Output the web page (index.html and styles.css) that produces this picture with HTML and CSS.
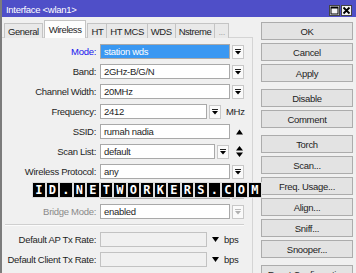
FILE: index.html
```html
<!DOCTYPE html>
<html lang="en">
<head>
    <meta charset="UTF-8">
    <title>Interface &lt;wlan1&gt;</title>
    <link rel="stylesheet" href="styles.css">
</head>
<body>
    <div class="window">
        <!-- Title bar -->
        <div class="titlebar">
            <span class="title">Interface &lt;wlan1&gt;</span>
            <div class="winbtns">
                <span class="wbtn"><svg width="9" height="9" viewBox="0 0 9 9"><rect x="1" y="1" width="7" height="7" fill="none" stroke="#000" stroke-width="1"/><rect x="1" y="1" width="7" height="1.5" fill="#000"/></svg></span>
                <span class="wbtn"><svg width="9" height="9" viewBox="0 0 9 9"><path d="M1.5 1.5l6 6M7.5 1.5l-6 6" stroke="#000" stroke-width="1.8"/></svg></span>
            </div>
        </div>

        <div class="content">
            <div class="main">
                <!-- Tabs -->
                <div class="tabs">
                    <span class="tab">General</span>
                    <span class="tab active">Wireless</span>
                    <span class="tab">HT</span>
                    <span class="tab">HT MCS</span>
                    <span class="tab">WDS</span>
                    <span class="tab">Nstreme</span>
                    <span class="tab more">...</span>
                </div>

                <!-- Wireless settings -->
                <div class="panel">
                    <div class="row">
                        <label class="hl">Mode:</label>
                        <span class="field w-full selected">station wds</span>
                        <span class="dd"><svg width="7" height="7" viewBox="0 0 7 7"><rect width="7" height="1"/><path d="M0 2.2h7l-3.5 4.3z"/></svg></span>
                    </div>
                    <div class="row">
                        <label>Band:</label>
                        <span class="field w-full">2GHz-B/G/N</span>
                        <span class="dd"><svg width="7" height="7" viewBox="0 0 7 7"><rect width="7" height="1"/><path d="M0 2.2h7l-3.5 4.3z"/></svg></span>
                    </div>
                    <div class="row">
                        <label>Channel Width:</label>
                        <span class="field w-full">20MHz</span>
                        <span class="dd"><svg width="7" height="7" viewBox="0 0 7 7"><rect width="7" height="1"/><path d="M0 2.2h7l-3.5 4.3z"/></svg></span>
                    </div>
                    <div class="row">
                        <label>Frequency:</label>
                        <span class="field w-short">2412</span>
                        <span class="dd"><svg width="7" height="7" viewBox="0 0 7 7"><rect width="7" height="1"/><path d="M0 2.2h7l-3.5 4.3z"/></svg></span>
                        <span class="unit">MHz</span>
                    </div>
                    <div class="row">
                        <label>SSID:</label>
                        <span class="field w-full">rumah nadia</span>
                        <span class="arrow"><svg width="7" height="6" viewBox="0 0 7 6"><path d="M0 5.5h7l-3.5-5z"/></svg></span>
                    </div>
                    <div class="row">
                        <label>Scan List:</label>
                        <span class="field w-scan">default</span>
                        <span class="dd"><svg width="7" height="7" viewBox="0 0 7 7"><rect width="7" height="1"/><path d="M0 2.2h7l-3.5 4.3z"/></svg></span>
                        <span class="arrow updown"><svg width="7" height="11" viewBox="0 0 7 11"><path d="M0 4.5h7l-3.5-4.5zM0 6.5h7l-3.5 4.5z"/></svg></span>
                    </div>
                    <div class="row">
                        <label>Wireless Protocol:</label>
                        <span class="field w-full">any</span>
                        <span class="dd"><svg width="7" height="7" viewBox="0 0 7 7"><rect width="7" height="1"/><path d="M0 2.2h7l-3.5 4.3z"/></svg></span>
                    </div>
                    <div class="row">
                        <label class="dim">Security Profile:</label>
                        <span class="field w-full">default</span>
                        <span class="dd"><svg width="7" height="7" viewBox="0 0 7 7"><rect width="7" height="1"/><path d="M0 2.2h7l-3.5 4.3z"/></svg></span>
                    </div>
                    <div class="row">
                        <label class="dim">Bridge Mode:</label>
                        <span class="field w-full">enabled</span>
                        <span class="dd off"><svg width="7" height="7" viewBox="0 0 7 7"><rect width="7" height="1"/><path d="M0 2.2h7l-3.5 4.3z"/></svg></span>
                    </div>

                    <div class="sep"></div>

                    <div class="row">
                        <label>Default AP Tx Rate:</label>
                        <span class="field w-short off"></span>
                        <span class="arrow down"><svg width="7" height="5" viewBox="0 0 7 5"><path d="M0 0h7l-3.5 5z"/></svg></span>
                        <span class="unit">bps</span>
                    </div>
                    <div class="row">
                        <label>Default Client Tx Rate:</label>
                        <span class="field w-short off"></span>
                        <span class="arrow down"><svg width="7" height="5" viewBox="0 0 7 5"><path d="M0 0h7l-3.5 5z"/></svg></span>
                        <span class="unit">bps</span>
                    </div>
                </div>
            </div>

            <!-- Action buttons -->
            <div class="side">
                <div class="group">
                    <button>OK</button>
                    <button>Cancel</button>
                    <button>Apply</button>
                </div>
                <div class="group">
                    <button>Disable</button>
                    <button>Comment</button>
                </div>
                <div class="group">
                    <button>Torch</button>
                    <button>Scan...</button>
                    <button>Freq. Usage...</button>
                    <button>Align...</button>
                    <button>Sniff...</button>
                    <button>Snooper...</button>
                </div>
                <div class="group">
                    <button>Reset Configuration</button>
                </div>
            </div>
        </div>

        <!-- Watermark -->
        <div class="watermark">
            <span>I</span><span>D</span><span>.</span><span>N</span><span>E</span><span>T</span><span>W</span><span>O</span><span>R</span><span>K</span><span>E</span><span>R</span><span>S</span><span>.</span><span>C</span><span>O</span><span>M</span>
        </div>
    </div>
</body>
</html>
```

FILE: styles.css
```css
body {
    margin: 0;
    padding: 0;
    background-color: #f0f0f0;
    font-family: "Liberation Sans", Arial, sans-serif;
    font-size: 9.5px;
    letter-spacing: -0.3px;
    color: #1e1e1e;
    overflow: hidden;
}

.window {
    position: relative;
    width: 356px;
    height: 273px;
    border-left: 2px solid #7c7c7c;
    box-sizing: border-box;
    overflow: hidden;
}

.titlebar {
    height: 17px;
    margin-left: -2px;
    background-color: #4f4fc8;
    color: #fff;
    display: flex;
    align-items: center;
    justify-content: space-between;
    padding: 0 4px 0 6px;
}

.title {
    padding-top: 1px;
}

.winbtns {
    display: flex;
    gap: 1px;
    padding-top: 3px;
}

.wbtn {
    width: 11px;
    height: 11px;
    background: #f4f4f4;
    border: 1px solid #444;
    display: flex;
    align-items: center;
    justify-content: center;
    box-sizing: border-box;
}

.content {
    display: flex;
}

.main {
    width: 251px;
}

.tabs {
    display: flex;
    align-items: flex-end;
    height: 18px;
    margin-top: 3px;
    padding-left: 2px;
    letter-spacing: -0.45px;
}

.tab {
    height: 15px;
    line-height: 15px;
    padding: 0 3px;
    border: 1px solid #c4c4c4;
    border-bottom: none;
    background: #e9e9e9;
    margin-right: -1px;
    box-sizing: border-box;
    white-space: nowrap;
}

.tab.active {
    height: 18px;
    line-height: 17px;
    background: #fdfdfd;
    position: relative;
    z-index: 1;
    margin: 0 1px 0 2px;
    padding: 0 4px;
}

.tab.more {
    color: #aaa;
    padding: 0 3px;
}

.panel {
    border-top: 1px solid #d4d4d4;
    border-right: 1px solid #d4d4d4;
    margin-top: -1px;
    padding-top: 6px;
    height: 260px;
    box-sizing: border-box;
}

.row {
    display: flex;
    align-items: center;
    height: 15px;
    margin-bottom: 5px;
}

.row label {
    width: 94px;
    text-align: right;
    margin-right: 4px;
    white-space: nowrap;
}

.row label.hl {
    color: #1515ee;
}

.row label.dim {
    color: #8a8a8a;
}

.field {
    height: 15px;
    line-height: 14px;
    padding-left: 3px;
    border: 1px solid #a9a9a9;
    background: #fff;
    box-sizing: border-box;
    white-space: nowrap;
}

.field.selected {
    background: #3a98f2;
    color: #fff;
}

.field.off {
    background: #f0f0f0;
    border-color: #c2c2c2;
}

.w-full {
    width: 130px;
}

.w-short {
    width: 107px;
}

.w-scan {
    width: 115px;
}

.dd {
    width: 12px;
    height: 14px;
    margin-left: 2px;
    border: 1px solid #c8c8c8;
    background: #fafafa;
    display: flex;
    align-items: center;
    justify-content: center;
    box-sizing: border-box;
}

.dd svg {
    width: 6px;
    height: 6px;
}

.dd.off svg {
    fill: #b0b0b0;
}

.arrow {
    margin-left: 6px;
    display: flex;
}

.arrow.updown {
    margin-left: 7px;
}

.arrow.down {
    margin-left: 5px;
}

.unit {
    margin-left: 5px;
}

.sep {
    height: 0;
    margin: 1px 8px 6px 3px;
    border-top: 1px solid #cfcfcf;
    border-bottom: 1px solid #fbfbfb;
}

.side {
    width: 92px;
    margin-left: 8px;
    padding-top: 5px;
    display: flex;
    flex-direction: column;
    gap: 7px;
}

.group {
    display: flex;
    flex-direction: column;
    gap: 3px;
}

button {
    height: 18px;
    padding: 0;
    border: 1px solid #acacac;
    background: #e3e3e3;
    font-family: inherit;
    font-size: 9.5px;
    letter-spacing: -0.3px;
    color: #1e1e1e;
    white-space: nowrap;
}

.watermark {
    position: absolute;
    left: 31px;
    top: 183px;
    display: flex;
    gap: 2px;
}

.watermark span {
    width: 11.5px;
    height: 14px;
    background: #000;
    color: #fff;
    font-family: "DejaVu Sans Mono", monospace;
    font-weight: bold;
    font-size: 12px;
    letter-spacing: 0;
    line-height: 14px;
    text-align: center;
    box-shadow: 0 0 0 1px #ddd;
}
```
